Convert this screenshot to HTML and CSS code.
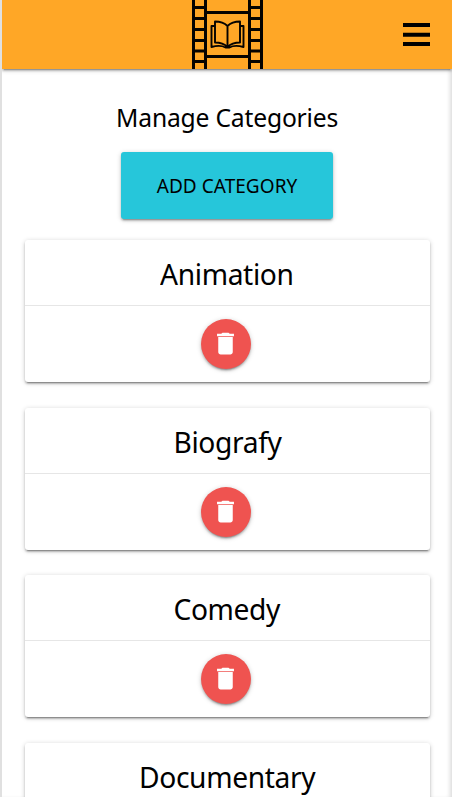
FILE: index.html
```html
<!DOCTYPE html>
<html lang="en">
<head>
<meta charset="utf-8">
<title>Manage Categories</title>
<link rel="stylesheet" href="styles.css">
</head>
<body>
<svg class="sprite" aria-hidden="true">
  <symbol id="trash" viewBox="0 0 24 24"><path d="M6 19c0 1.100.9 2 2 2h8c1.100 0 2-.9 2-2V6.700H6v12.300zM19 4h-3.500l-1-1h-5l-1 1H5v2h14V4z"/></symbol>
</svg>
<div class="screen">
  <header class="navbar">
    <svg class="logo" viewBox="0 0 72 69" fill="none" stroke="#050300">
      <path stroke-width="3" d="M2.500 0V69M14.500 0V69M58.500 0V69M70.500 0V69"/>
      <path stroke-width="2.800" d="M1 7.500H14M1 18.500H14M1 29.500H14M1 40.500H14M1 51H14M1 61.500H14M58 7.500H71M58 18.500H71M58 29.500H71M58 40.500H71M58 51H71M58 61.500H71"/>
      <path stroke-width="3" d="M14 12.500H58M14 56.500H58"/>
      <path stroke-width="1.900" stroke-linejoin="round" d="M36.500 26C33 22.500 29 21.500 24 21.500V42.500C29 42.500 33 43.500 36.500 47C40 43.500 44 42.500 49 42.500V21.500C44 21.500 40 22.500 36.500 26ZM36.500 26V47M24 26H20.500V47C26 45.500 31 45.500 34.500 47.500H38.500C42 45.500 47 45.500 52.500 47V26H49"/>
    </svg>
    <svg class="menu" viewBox="0 0 27 24"><path d="M0 0H27V4H0ZM0 9.700H27V13.700H0ZM0 19H27V23H0Z"/></svg>
  </header>
  <main class="content">
    <h1 class="heading">Manage Categories</h1>
    <button class="add">ADD CATEGORY</button>
    <section class="cards">
      <article class="card"><h2 class="title"><span class="name">Animation</span></h2><div class="action"><button class="delete" aria-label="Delete"><svg class="icon"><use href="#trash"/></svg></button></div></article>
      <article class="card"><h2 class="title"><span class="name">Biografy</span></h2><div class="action"><button class="delete" aria-label="Delete"><svg class="icon"><use href="#trash"/></svg></button></div></article>
      <article class="card"><h2 class="title"><span class="name">Comedy</span></h2><div class="action"><button class="delete" aria-label="Delete"><svg class="icon"><use href="#trash"/></svg></button></div></article>
      <article class="card"><h2 class="title"><span class="name">Documentary</span></h2><div class="action"><button class="delete" aria-label="Delete"><svg class="icon"><use href="#trash"/></svg></button></div></article>
    </section>
  </main>
</div>
</body>
</html>
```
FILE: styles.css
```css
* { box-sizing: border-box; }
html { overflow: hidden; }
body {
  margin: 0;
  height: 797px;
  overflow: hidden;
  background: #fff;
  color: #000;
  font-family: "Noto Sans", sans-serif;
}
.sprite { display: none; }
.screen {
  height: 797px;
  overflow: hidden;
  border-left: 2px solid #e0e0e0;
  box-shadow: inset -4px 0 4px -2px rgba(0, 0, 0, .14);
}
.navbar {
  display: grid;
  grid-template-columns: 1fr 72px 1fr;
  align-items: center;
  height: 69px;
  background: #ffa726;
  box-shadow: 0 2px 2px rgba(0, 0, 0, .18), 0 3px 1px -2px rgba(0, 0, 0, .2), 0 1px 5px rgba(0, 0, 0, .2);
}
.logo { grid-column: 2; width: 72px; height: 69px; }
.menu { justify-self: end; width: 27px; height: 24px; margin-right: 22px; }
.content {
  display: flex;
  flex-direction: column;
  align-items: center;
  padding: 30px 22px 0 23px;
}
.heading {
  margin: 0;
  font-size: 26px;
  font-weight: 400;
  line-height: 36px;
  letter-spacing: -.2px;
  transform: scaleX(.948);
}
.add {
  width: 212px;
  height: 67px;
  margin: 17px 1px 21px 0;
  padding: 0;
  border: 0;
  border-radius: 3px;
  background: #26c6da;
  color: #000;
  font: 19px "Noto Sans", sans-serif;
  letter-spacing: .05px;
  box-shadow: 0 2px 2px rgba(0, 0, 0, .18), 0 3px 1px -2px rgba(0, 0, 0, .2), 0 1px 5px rgba(0, 0, 0, .2);
}
.cards { display: flex; flex-direction: column; gap: 25.500px; width: 100%; }
.card {
  height: 142px;
  border-radius: 3px;
  background: #fff;
  box-shadow: 0 2px 2px rgba(0, 0, 0, .2), 0 3px 1px -2px rgba(0, 0, 0, .25), 0 1px 5px rgba(0, 0, 0, .2);
}
.title {
  height: 66px;
  margin: 0;
  border-bottom: 1px solid #e6e6e6;
  font-size: 29.500px;
  font-weight: 400;
  line-height: 67px;
  text-align: center;
}
.name { display: inline-block; padding-right: 1px; letter-spacing: -.4px; transform: scaleX(.956); }
.action { display: flex; justify-content: center; padding: 13px 3px 0 0; }
.delete {
  display: flex;
  align-items: center;
  justify-content: center;
  width: 50px;
  height: 50px;
  padding: 0;
  border: 0;
  border-radius: 50%;
  background: #ef5350;
  box-shadow: 0 2px 2px rgba(0, 0, 0, .18), 0 3px 1px -2px rgba(0, 0, 0, .2), 0 1px 5px rgba(0, 0, 0, .2);
}
.icon { width: 29px; height: 29px; margin: 0 1px 1px 0; fill: #fff; }
```
